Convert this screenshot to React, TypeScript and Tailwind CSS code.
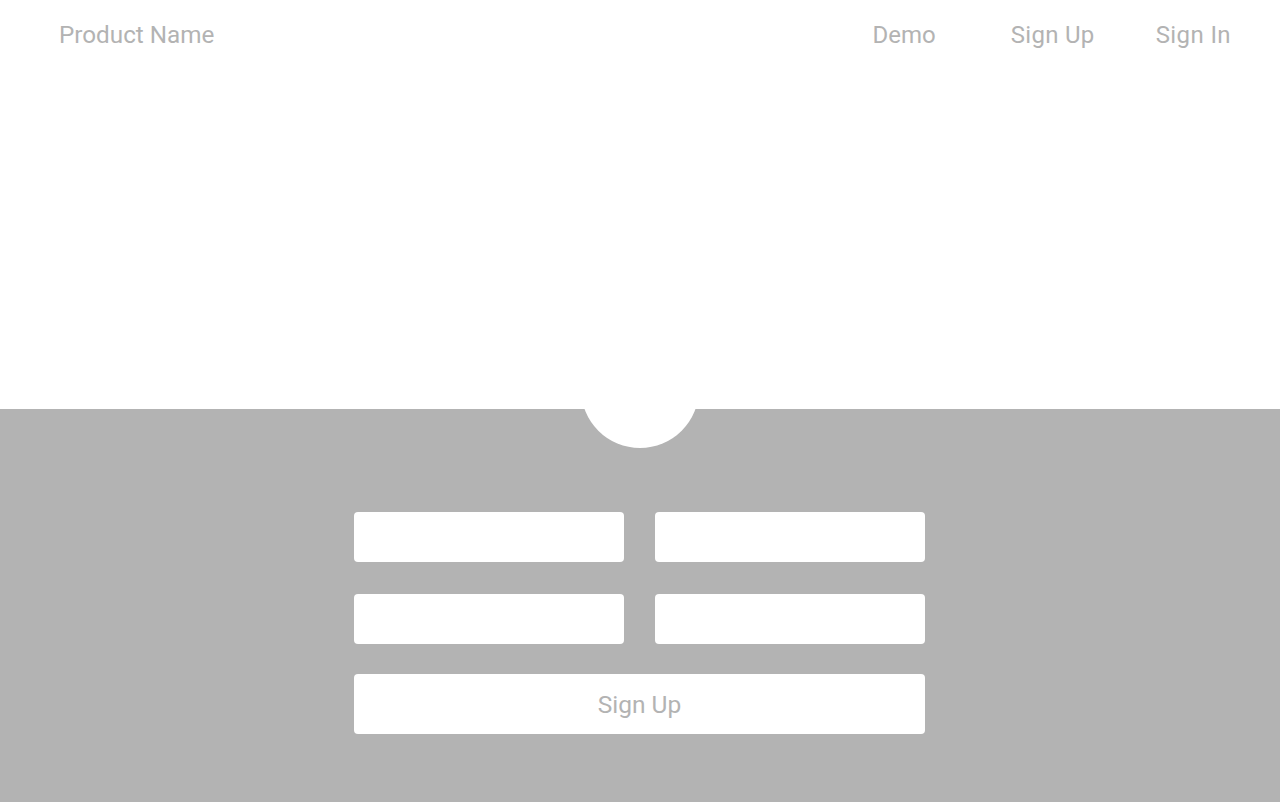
export default function App() {
  return (
    <div className="w-full h-[802px] flex flex-col bg-white font-['Roboto',sans-serif] text-[#b3b3b3] overflow-hidden">
      <header className="h-[409px] shrink-0">
        <nav className="h-[70px] flex items-center pl-[59px] pr-[49px] text-[24px]">
          <span className="text-[24.25px]">Product Name</span>
          <div className="ml-auto flex items-center">
            <a className="mr-[75px]">Demo</a>
            <a className="mr-[61px] tracking-[0.3px]">Sign Up</a>
            <a className="tracking-[0.4px]">Sign In</a>
          </div>
        </nav>
      </header>

      <section className="relative flex-1 bg-[#b3b3b3] flex flex-col items-center pt-[103px]">
        {/* notch */}
        <div className="absolute left-1/2 -translate-x-1/2 -top-[79px] w-[118px] h-[118px] rounded-full bg-white" />

        <form className="w-[571px] mr-px flex flex-col">
          <div className="grid grid-cols-[270px_270px] justify-between gap-y-[32px]">
            <input className="h-[50px] rounded bg-white outline-none px-3" />
            <input className="h-[50px] rounded bg-white outline-none px-3" />
            <input className="h-[50px] rounded bg-white outline-none px-3" />
            <input className="h-[50px] rounded bg-white outline-none px-3" />
          </div>
          <button type="button" className="mt-[30px] h-[60px] pt-[2px] rounded bg-white text-[24.5px] text-[#b3b3b3]">
            Sign Up
          </button>
        </form>
      </section>
    </div>
  );
}
